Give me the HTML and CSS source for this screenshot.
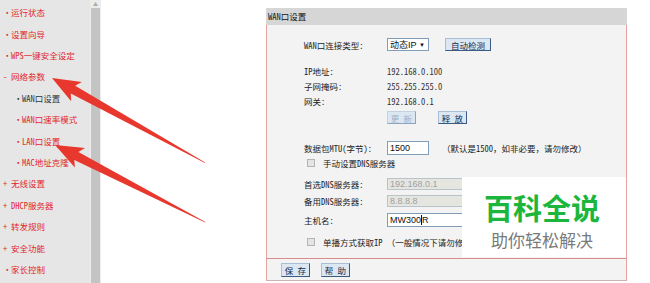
FILE: index.html
```html
<!DOCTYPE html>
<html>
<head>
    <meta charset="utf-8">
    <title>WAN口设置</title>
    <link rel="stylesheet" href="styles.css">
</head>
<body>
    <div class="page">
        <ul class="menu">
            <li><span class="mark">•</span>运行状态</li>
            <li><span class="mark">•</span>设置向导</li>
            <li><span class="mark">•</span>WPS一键安全设定</li>
            <li><span class="mark">-</span>网络参数</li>
            <li class="sub current"><span class="mark">•</span>WAN口设置</li>
            <li class="sub"><span class="mark">•</span>WAN口速率模式</li>
            <li class="sub"><span class="mark">•</span>LAN口设置</li>
            <li class="sub"><span class="mark">•</span>MAC地址克隆</li>
            <li><span class="mark">+</span>无线设置</li>
            <li><span class="mark">+</span>DHCP服务器</li>
            <li><span class="mark">+</span>转发规则</li>
            <li><span class="mark">+</span>安全功能</li>
            <li><span class="mark">•</span>家长控制</li>
        </ul>

        <div class="scrollbar">
            <div class="scroll-up">▲</div>
            <div class="scroll-thumb"></div>
        </div>

        <div class="main">
            <div class="panel">
                <div class="panel-head">WAN口设置</div>
                <div class="panel-body">
                    <div class="row row-type">
                        <span class="label">WAN口连接类型:</span>
                        <span class="select">动态IP<i>▼</i></span>
                        <span class="btn btn-detect">自动检测</span>
                    </div>
                    <div class="row row-info row-first"><span class="label">IP地址:</span><span class="value">192.168.0.100</span></div>
                    <div class="row row-info"><span class="label">子网掩码:</span><span class="value">255.255.255.0</span></div>
                    <div class="row row-info"><span class="label">网关:</span><span class="value">192.168.0.1</span></div>
                    <div class="row row-renew">
                        <span class="label"></span>
                        <span class="btn btn-small disabled">更 新</span>
                        <span class="btn btn-small btn-release">释 放</span>
                    </div>
                    <div class="row row-mtu">
                        <span class="label">数据包MTU(字节):</span>
                        <span class="field field-mtu">1500</span>
                        <span class="note">（默认是1500，如非必要，请勿修改）</span>
                    </div>
                    <div class="row row-check">
                        <span class="check"></span><span>手动设置DNS服务器</span>
                    </div>
                    <div class="row row-dns1">
                        <span class="label">首选DNS服务器:</span>
                        <span class="field off">192.168.0.1</span>
                    </div>
                    <div class="row row-dns2">
                        <span class="label">备用DNS服务器:</span>
                        <span class="field off">8.8.8.8</span>
                    </div>
                    <div class="row row-host">
                        <span class="label">主机名:</span>
                        <span class="field field-host">MW300<span class="caret"></span>R</span>
                    </div>
                    <div class="row row-check row-unicast">
                        <span class="check"></span><span>单播方式获取IP （一般情况下请勿修改）</span>
                    </div>
                </div>
                <div class="panel-foot">
                    <span class="btn btn-foot">保 存</span>
                    <span class="btn btn-foot">帮 助</span>
                </div>

                <div class="watermark">
                    <div class="wm-title">百科全说</div>
                    <div class="wm-sub">助你轻松解决</div>
                </div>
            </div>
        </div>
    </div>

    <svg class="arrows" width="650" height="283" viewBox="0 0 650 283">
        <polygon transform="translate(52 78) rotate(29)" points="0,0 28,-11 24,-4.5 175,-0.3 175,0.3 24,4.5 28,11"/>
        <polygon transform="translate(55 145) rotate(27.2)" points="0,0 28,-11 24,-4.5 169,-0.3 169,0.3 24,4.5 28,11"/>
    </svg>
</body>
</html>
```

FILE: styles.css
```css
* { box-sizing: border-box; }
html, body { margin: 0; }
body { width: 650px; height: 283px; overflow: hidden; position: relative; background: #fff; font-family: "Noto Sans Mono CJK SC", "Noto Sans CJK SC", "Noto Sans", sans-serif; font-size: 8.5px; color: #222; }

.page { display: flex; height: 283px; }

/* left menu */
.menu { width: 90px; margin: 0; padding: 2.3px 0 0; list-style: none; background: #e6e6e6; }
.menu li { display: flex; height: 21.4px; line-height: 21.4px; padding-left: 3px; color: #e2262b; white-space: nowrap; }
.menu li.sub { padding-left: 14px; }
.menu li.current { color: #333; }
.menu .mark { width: 8px; }

.scrollbar { display: flex; flex-direction: column; align-items: center; width: 11px; padding: 0 1px; background: #ececec; }
.scroll-up { height: 8px; font-size: 5px; line-height: 8px; color: #aaa; }
.scroll-thumb { flex: 1; width: 9px; background: #c4c4c4; }

/* settings panel */
.main { flex: 1; padding: 8px 0 0 165px; }
.panel { position: relative; width: 361px; }
.panel-head { height: 17px; line-height: 17px; padding-left: 2px; background: #d6d6d6; color: #111; }
.panel-body { height: 233px; padding: 0 0 0 37px; border-left: 1px solid #e3a3a3; border-right: 1px solid #e3a3a3; background: #f3f3f3; overflow: hidden; }

.row { display: flex; align-items: center; white-space: nowrap; }
.label { width: 83px; flex: none; color: #222; }
.value { color: #333; }

.row-type { height: 13px; margin-top: 13px; }
.row-info { height: 15px; }
.row-first { margin-top: 12px; }
.row-renew { height: 13px; margin-top: 3px; }
.row-mtu { height: 14px; margin-top: 17px; }
.row-check { height: 14px; margin-top: 1px; padding-left: 3px; }
.row-dns1 { height: 12px; margin-top: 8px; }
.row-dns2 { height: 12px; margin-top: 5px; }
.row-host { height: 14px; margin-top: 6px; }
.row-unicast { margin-top: 8px; }

.select { display: flex; align-items: center; justify-content: space-between; width: 42px; height: 13px; padding: 0 3px 0 2px; border: 1px solid #7f9db9; background: #fff; color: #111; font-family: "Liberation Sans", "Noto Sans CJK SC", sans-serif; font-size: 9px; }
.select i { font-style: normal; font-size: 6px; }

.btn { display: inline-flex; align-items: center; justify-content: center; height: 13px; border: 1px solid; border-color: #a9bdd4 #3d5a80 #3d5a80 #a9bdd4; background: #dbe7f3; color: #142a4a; }
.btn-detect { width: 46px; margin-left: 16px; }
.btn-small { width: 29px; }
.btn-release { margin-left: 22px; }
.btn.disabled { color: #9fb0c4; border-color: #c4d2e0 #8ea4bd #8ea4bd #c4d2e0; }

.field { display: flex; align-items: center; width: 110px; height: 100%; padding: 0 2px; border: 1px solid #7f9db9; background: #fff; color: #111; font-family: "Liberation Sans", "Noto Sans CJK SC", sans-serif; font-size: 9px; }
.field-mtu { width: 42px; }
.field.off { border-color: #b9c3cb; background: #e6e6e1; color: #a0a0a0; }
.caret { width: 1px; height: 10px; background: #111; }
.note { margin-left: 13px; color: #222; }

.check { width: 8px; height: 8px; margin-right: 8px; border: 1px solid #b4b4b4; background: #e4e4e4; }

.panel-foot { display: flex; gap: 11px; height: 23px; padding: 4px 0 0 14px; border: 1px solid #e3a3a3; border-top-color: #d98c8c; border-bottom-color: #cdb4b4; background: #f3f3f3; }
.btn-foot { width: 29px; height: 14px; }

/* watermark overlay */
.watermark { position: absolute; left: 196px; top: 169px; width: 164px; height: 80px; padding: 16px 4px 0 0; background: #fff; text-align: center; font-family: "Noto Sans CJK SC", sans-serif; }
.wm-title { font-size: 29px; line-height: 29px; font-weight: 700; color: #1db63c; }
.wm-sub { margin-top: 9px; font-size: 17px; line-height: 17px; color: #7a7a7a; }

/* red pointer arrows */
.arrows { position: absolute; left: 0; top: 0; pointer-events: none; }
.arrows polygon { fill: #e8382e; }
```
